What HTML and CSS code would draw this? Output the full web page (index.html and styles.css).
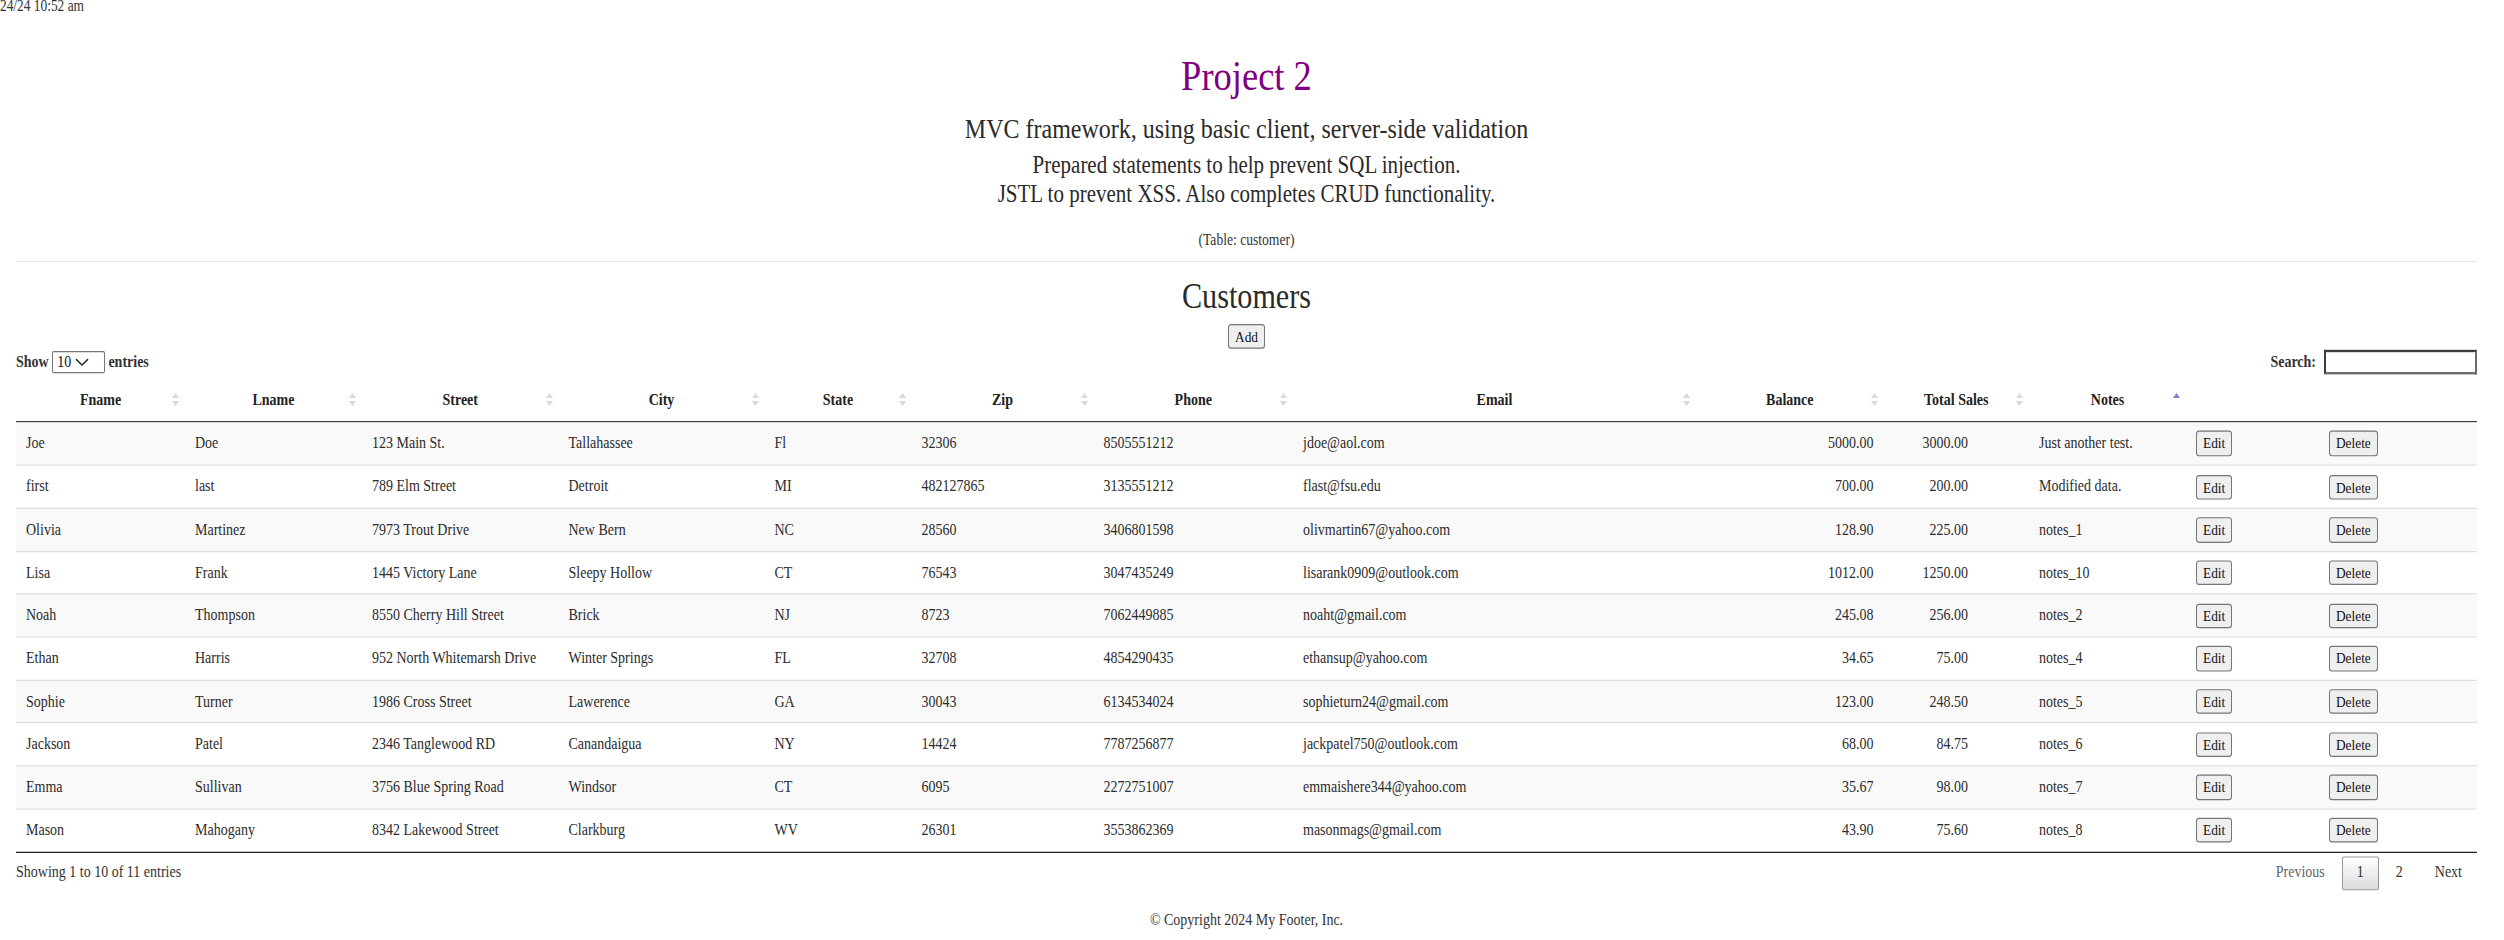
FILE: index.html
```html
<!DOCTYPE html>
<html lang="en">
<head>
<meta charset="utf-8">
<title>Project 2</title>
<link rel="stylesheet" href="styles.css">
</head>
<body>
<div class="page">
  <div class="stamp"><span>4/24/24 10:52 am</span></div>
  <main class="content">
    <header class="intro">
      <h1 class="title">Project 2</h1>
      <h2 class="subtitle">MVC framework, using basic client, server-side validation</h2>
      <p class="lead">Prepared statements to help prevent SQL injection.<br>JSTL to prevent XSS. Also completes CRUD functionality.</p>
      <p class="tablename">(Table: customer)</p>
    </header>
    <hr class="rule">
    <section class="customers">
      <h2 class="section-title">Customers</h2>
      <div class="add-row"><button class="btn" type="button">Add</button></div>
      <div class="dt-top">
        <label class="dt-length">Show <span class="dt-select"><span>10</span><svg class="chev" width="14" height="7" viewBox="0 0 14 7"><polyline points="1,1 7,6 13,1" fill="none" stroke="#222" stroke-width="1.4"/></svg></span> entries</label>
        <label class="dt-filter">Search:<input class="dt-search" type="text"></label>
      </div>
      <table class="dt-table">
        <colgroup>
          <col class="w-fname"><col class="w-lname"><col class="w-street"><col class="w-city"><col class="w-state"><col class="w-zip"><col class="w-phone"><col class="w-email"><col class="w-balance"><col class="w-sales"><col class="w-notes"><col class="w-edit"><col class="w-delete">
        </colgroup>
        <thead>
          <tr>
            <th><div class="th-inner"><span class="th-pad"></span><span class="th-label">Fname</span><span class="sort"><svg width="7" height="11" viewBox="0 0 7 11"><path d="M0 4.2 3.5 0 7 4.2Z M0 6.8 3.5 11 7 6.8Z" fill="#d9d9d9"/></svg></span></div></th>
            <th><div class="th-inner"><span class="th-pad"></span><span class="th-label">Lname</span><span class="sort"><svg width="7" height="11" viewBox="0 0 7 11"><path d="M0 4.2 3.5 0 7 4.2Z M0 6.8 3.5 11 7 6.8Z" fill="#d9d9d9"/></svg></span></div></th>
            <th><div class="th-inner"><span class="th-pad"></span><span class="th-label">Street</span><span class="sort"><svg width="7" height="11" viewBox="0 0 7 11"><path d="M0 4.2 3.5 0 7 4.2Z M0 6.8 3.5 11 7 6.8Z" fill="#d9d9d9"/></svg></span></div></th>
            <th><div class="th-inner"><span class="th-pad"></span><span class="th-label">City</span><span class="sort"><svg width="7" height="11" viewBox="0 0 7 11"><path d="M0 4.2 3.5 0 7 4.2Z M0 6.8 3.5 11 7 6.8Z" fill="#d9d9d9"/></svg></span></div></th>
            <th><div class="th-inner"><span class="th-pad"></span><span class="th-label">State</span><span class="sort"><svg width="7" height="11" viewBox="0 0 7 11"><path d="M0 4.2 3.5 0 7 4.2Z M0 6.8 3.5 11 7 6.8Z" fill="#d9d9d9"/></svg></span></div></th>
            <th><div class="th-inner"><span class="th-pad"></span><span class="th-label">Zip</span><span class="sort"><svg width="7" height="11" viewBox="0 0 7 11"><path d="M0 4.2 3.5 0 7 4.2Z M0 6.8 3.5 11 7 6.8Z" fill="#d9d9d9"/></svg></span></div></th>
            <th><div class="th-inner"><span class="th-pad"></span><span class="th-label">Phone</span><span class="sort"><svg width="7" height="11" viewBox="0 0 7 11"><path d="M0 4.2 3.5 0 7 4.2Z M0 6.8 3.5 11 7 6.8Z" fill="#d9d9d9"/></svg></span></div></th>
            <th><div class="th-inner"><span class="th-pad"></span><span class="th-label">Email</span><span class="sort"><svg width="7" height="11" viewBox="0 0 7 11"><path d="M0 4.2 3.5 0 7 4.2Z M0 6.8 3.5 11 7 6.8Z" fill="#d9d9d9"/></svg></span></div></th>
            <th><div class="th-inner"><span class="th-pad"></span><span class="th-label">Balance</span><span class="sort"><svg width="7" height="11" viewBox="0 0 7 11"><path d="M0 4.2 3.5 0 7 4.2Z M0 6.8 3.5 11 7 6.8Z" fill="#d9d9d9"/></svg></span></div></th>
            <th><div class="th-inner"><span class="th-pad"></span><span class="th-label">Total Sales</span><span class="sort"><svg width="7" height="11" viewBox="0 0 7 11"><path d="M0 4.2 3.5 0 7 4.2Z M0 6.8 3.5 11 7 6.8Z" fill="#d9d9d9"/></svg></span></div></th>
            <th><div class="th-inner"><span class="th-pad"></span><span class="th-label">Notes</span><span class="sort"><svg width="7" height="11" viewBox="0 0 7 11"><path d="M0 4.2 3.5 0 7 4.2Z" fill="#7f80d8"/></svg></span></div></th>
            <th></th>
            <th></th>
          </tr>
        </thead>
        <tbody>
          <tr><td>Joe</td><td>Doe</td><td>123 Main St.</td><td>Tallahassee</td><td>Fl</td><td>32306</td><td>8505551212</td><td>jdoe@aol.com</td><td class="num">5000.00</td><td class="num sales">3000.00</td><td>Just another test.</td><td><button class="btn" type="button">Edit</button></td><td><button class="btn" type="button">Delete</button></td></tr>
          <tr><td>first</td><td>last</td><td>789 Elm Street</td><td>Detroit</td><td>MI</td><td>482127865</td><td>3135551212</td><td>flast@fsu.edu</td><td class="num">700.00</td><td class="num sales">200.00</td><td>Modified data.</td><td><button class="btn" type="button">Edit</button></td><td><button class="btn" type="button">Delete</button></td></tr>
          <tr><td>Olivia</td><td>Martinez</td><td>7973 Trout Drive</td><td>New Bern</td><td>NC</td><td>28560</td><td>3406801598</td><td>olivmartin67@yahoo.com</td><td class="num">128.90</td><td class="num sales">225.00</td><td>notes_1</td><td><button class="btn" type="button">Edit</button></td><td><button class="btn" type="button">Delete</button></td></tr>
          <tr><td>Lisa</td><td>Frank</td><td>1445 Victory Lane</td><td>Sleepy Hollow</td><td>CT</td><td>76543</td><td>3047435249</td><td>lisarank0909@outlook.com</td><td class="num">1012.00</td><td class="num sales">1250.00</td><td>notes_10</td><td><button class="btn" type="button">Edit</button></td><td><button class="btn" type="button">Delete</button></td></tr>
          <tr><td>Noah</td><td>Thompson</td><td>8550 Cherry Hill Street</td><td>Brick</td><td>NJ</td><td>8723</td><td>7062449885</td><td>noaht@gmail.com</td><td class="num">245.08</td><td class="num sales">256.00</td><td>notes_2</td><td><button class="btn" type="button">Edit</button></td><td><button class="btn" type="button">Delete</button></td></tr>
          <tr><td>Ethan</td><td>Harris</td><td>952 North Whitemarsh Drive</td><td>Winter Springs</td><td>FL</td><td>32708</td><td>4854290435</td><td>ethansup@yahoo.com</td><td class="num">34.65</td><td class="num sales">75.00</td><td>notes_4</td><td><button class="btn" type="button">Edit</button></td><td><button class="btn" type="button">Delete</button></td></tr>
          <tr><td>Sophie</td><td>Turner</td><td>1986 Cross Street</td><td>Lawerence</td><td>GA</td><td>30043</td><td>6134534024</td><td>sophieturn24@gmail.com</td><td class="num">123.00</td><td class="num sales">248.50</td><td>notes_5</td><td><button class="btn" type="button">Edit</button></td><td><button class="btn" type="button">Delete</button></td></tr>
          <tr><td>Jackson</td><td>Patel</td><td>2346 Tanglewood RD</td><td>Canandaigua</td><td>NY</td><td>14424</td><td>7787256877</td><td>jackpatel750@outlook.com</td><td class="num">68.00</td><td class="num sales">84.75</td><td>notes_6</td><td><button class="btn" type="button">Edit</button></td><td><button class="btn" type="button">Delete</button></td></tr>
          <tr><td>Emma</td><td>Sullivan</td><td>3756 Blue Spring Road</td><td>Windsor</td><td>CT</td><td>6095</td><td>2272751007</td><td>emmaishere344@yahoo.com</td><td class="num">35.67</td><td class="num sales">98.00</td><td>notes_7</td><td><button class="btn" type="button">Edit</button></td><td><button class="btn" type="button">Delete</button></td></tr>
          <tr><td>Mason</td><td>Mahogany</td><td>8342 Lakewood Street</td><td>Clarkburg</td><td>WV</td><td>26301</td><td>3553862369</td><td>masonmags@gmail.com</td><td class="num">43.90</td><td class="num sales">75.60</td><td>notes_8</td><td><button class="btn" type="button">Edit</button></td><td><button class="btn" type="button">Delete</button></td></tr>
        </tbody>
      </table>
      <div class="dt-bottom">
        <div class="dt-info">Showing 1 to 10 of 11 entries</div>
        <div class="dt-paginate">
          <span class="pg disabled">Previous</span>
          <span class="pg current">1</span>
          <span class="pg">2</span>
          <span class="pg">Next</span>
        </div>
      </div>
    </section>
    <footer class="footer">© Copyright 2024 My Footer, Inc.</footer>
  </main>
</div>
</body>
</html>
```

FILE: styles.css
```css
html {
  overflow: hidden;
}

html, body {
  margin: 0;
  padding: 0;
  background: #ffffff;
}

body {
  font-family: "Liberation Serif", "Times New Roman", serif;
  color: #333333;
  min-height: 940px;
}

.page {
  width: 2504px;
  transform: scaleY(1.17);
  transform-origin: 0 0;
}

.stamp {
  width: 84px;
  height: 11px;
  overflow: hidden;
  display: flex;
  justify-content: flex-end;
  white-space: nowrap;
  font-size: 13.4px;
  line-height: 10px;
  color: #333;
}

.content {
  margin-left: 16px;
  width: 2461px;
}

.intro {
  text-align: center;
}

.title {
  margin: 32.5px 0 0;
  font-size: 36.5px;
  line-height: 42px;
  font-weight: normal;
  color: #800080;
}

.subtitle {
  margin: 10.5px 0 0;
  font-size: 24px;
  line-height: 28px;
  font-weight: normal;
  color: #2a2a2a;
}

.lead {
  margin: 5.35px 0 0;
  font-size: 21px;
  line-height: 24.8px;
  color: #2a2a2a;
}

.tablename {
  margin: 18.35px 0 0;
  font-size: 13.6px;
  line-height: 16px;
}

.rule {
  margin: 9.8px 0 0;
  height: 0;
  border: 0;
  border-top: 1px solid #e6e6e6;
}

.section-title {
  margin: 12.1px 0 0;
  font-size: 30.2px;
  line-height: 34px;
  font-weight: normal;
  text-align: center;
  color: #2a2a2a;
}

.add-row {
  margin-top: 6.4px;
  display: flex;
  justify-content: center;
}

.btn {
  font-family: "Liberation Serif", "Times New Roman", serif;
  font-size: 13.33px;
  line-height: 15.3px;
  padding: 2px 6px;
  border: 1px solid #767676;
  border-radius: 3px;
  background: #efefef;
  color: #111;
  margin: 0;
}

.dt-top {
  margin-top: 0.8px;
  height: 22px;
  display: flex;
  justify-content: space-between;
  align-items: center;
  font-size: 14px;
  font-weight: bold;
}

.dt-length,
.dt-filter {
  display: flex;
  align-items: center;
  white-space: pre;
}

.dt-select {
  display: inline-flex;
  align-items: center;
  gap: 4px;
  box-sizing: border-box;
  width: 52.7px;
  height: 19px;
  padding-left: 4px;
  border: 1px solid #767676;
  border-radius: 2px;
  font-weight: normal;
  font-size: 14px;
  color: #111;
  background: #fff;
}

.chev {
  display: block;
}

.dt-search {
  box-sizing: border-box;
  width: 153px;
  height: 21.4px;
  margin: 0 0 0 8px;
  padding: 1px 2px;
  border: 2px solid #555;
  border-color: #3c3c3c #6a6a6a #6a6a6a #3c3c3c;
  background: #fff;
  font-family: inherit;
  font-size: 13.33px;
}

.dt-table {
  margin-top: 3px;
  width: 2461px;
  table-layout: fixed;
  border-collapse: separate;
  border-spacing: 0;
  border-bottom: 1px solid #111;
  font-size: 14px;
}

.w-fname { width: 169px; }
.w-lname { width: 177px; }
.w-street { width: 196.5px; }
.w-city { width: 206px; }
.w-state { width: 147px; }
.w-zip { width: 182px; }
.w-phone { width: 199.5px; }
.w-email { width: 403px; }
.w-balance { width: 187.6px; }
.w-sales { width: 145.4px; }
.w-notes { width: 157px; }
.w-edit { width: 133px; }
.w-delete { width: 158px; }

.dt-table th {
  padding: 10px 0;
  line-height: 16px;
  font-weight: bold;
  color: #222;
  border-bottom: 1px solid #111;
}

.th-inner {
  display: flex;
  align-items: center;
  height: 16px;
}

.th-pad {
  flex: none;
  width: 19px;
}

.th-label {
  flex: 1;
  text-align: center;
  white-space: nowrap;
}

.sort {
  flex: none;
  width: 19px;
  display: flex;
  justify-content: center;
  align-items: center;
}

.sort svg {
  display: block;
}

.dt-table tbody tr {
  height: 36.7px;
}

.dt-table tbody tr:nth-child(odd) {
  background: #f9f9f9;
}

.dt-table td {
  padding: 0 10px;
  line-height: 16px;
  white-space: nowrap;
  vertical-align: middle;
  border-top: 1px solid #ddd;
  color: #2b2b2b;
}

.dt-table tbody tr:first-child td {
  border-top: 0;
}

.dt-table td.num {
  text-align: right;
}

.dt-table td.sales {
  padding-right: 61px;
}

.dt-bottom {
  margin-top: 3.6px;
  height: 28.5px;
  display: flex;
  justify-content: space-between;
  align-items: center;
  font-size: 14px;
}

.dt-info {
  line-height: 16px;
}

.dt-paginate {
  display: flex;
  align-items: center;
}

.pg {
  margin-left: 2px;
  padding: 6px 14px;
  line-height: 14.5px;
  border: 1px solid transparent;
  border-radius: 2px;
  color: #333;
}

.pg.disabled {
  color: #666;
}

.pg.current {
  border-color: #979797;
  background: linear-gradient(to bottom, #ffffff 0%, #dcdcdc 100%);
}

.footer {
  margin-top: 18px;
  text-align: center;
  font-size: 14px;
  line-height: 16px;
}
```
